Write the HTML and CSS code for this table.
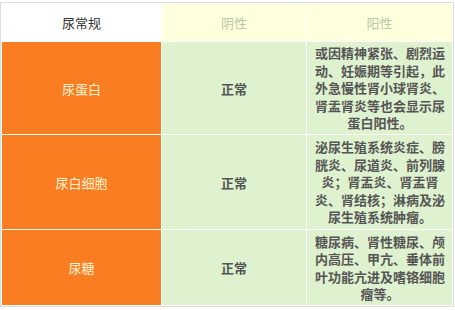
FILE: index.html
```html
<!DOCTYPE html>
<html lang="zh">
<head>
<meta charset="utf-8">
<link rel="stylesheet" href="styles.css">
</head>
<body>
<table class="urine">
  <colgroup>
    <col class="c1"><col class="c2"><col class="c3">
  </colgroup>
  <thead>
    <tr class="head">
      <th class="h-name">尿常规</th>
      <th class="h-val">阴性</th>
      <th class="h-val">阳性</th>
    </tr>
  </thead>
  <tbody>
    <tr class="r1">
      <td class="name">尿蛋白</td>
      <td class="neg">正常</td>
      <td class="pos">或因精神紧张、剧烈运动、妊娠期等引起，此外急慢性肾小球肾炎、肾盂肾炎等也会显示尿蛋白阳性。</td>
    </tr>
    <tr class="r2">
      <td class="name">尿白细胞</td>
      <td class="neg">正常</td>
      <td class="pos">泌尿生殖系统炎症、膀胱炎、尿道炎、前列腺炎；肾盂炎、肾盂肾炎、肾结核；淋病及泌尿生殖系统肿瘤。</td>
    </tr>
    <tr class="r3">
      <td class="name">尿糖</td>
      <td class="neg">正常</td>
      <td class="pos">糖尿病、肾性糖尿、颅内高压、甲亢、垂体前叶功能亢进及嗜铬细胞瘤等。</td>
    </tr>
  </tbody>
</table>
</body>
</html>
```

FILE: styles.css
```css
html, body {
  margin: 0;
  padding: 0;
  background: #ffffff;
}
body {
  padding-top: 2px;
  font-family: "Noto Sans CJK SC", "Noto Sans", sans-serif;
  font-size: 13px;
}
.urine {
  table-layout: fixed;
  width: 454px;
  border: 1px solid #dcdcdc;
  border-collapse: separate;
  border-spacing: 1px;
  background: #ffffff;
}
.c1 { width: 159px; }
.c2 { width: 144px; }
.c3 { width: 145px; }
.urine th, .urine td {
  padding: 0;
  text-align: center;
  vertical-align: middle;
  font-weight: normal;
}
.head th { height: 37px; }
.h-name {
  background: #ffffff;
  color: #333333;
}
.h-val {
  background: #ffffdd;
  color: #b9c9a9;
}
.r1 td { height: 92px; }
.r2 td { height: 94px; }
.r3 td { height: 75px; }
.name {
  background: #fb7d22;
  color: #fff2cf;
}
.neg {
  background: #dff2cf;
  color: #555555;
  font-weight: bold !important;
}
.pos {
  background: #dff2cf;
  color: #555555;
  font-weight: bold !important;
  line-height: 17.5px;
  padding: 0 7px 0 8px !important;
}
```
